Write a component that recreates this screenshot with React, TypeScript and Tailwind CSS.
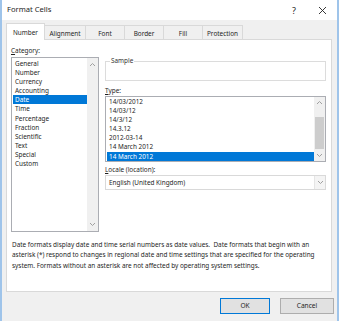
import { useState } from "react";

const categories = [
  "General",
  "Number",
  "Currency",
  "Accounting",
  "Date",
  "Time",
  "Percentage",
  "Fraction",
  "Scientific",
  "Text",
  "Special",
  "Custom",
];

const types = [
  "14/03/2012",
  "14/03/12",
  "14/3/12",
  "14.3.12",
  "2012-03-14",
  "14 March 2012",
  "14 March 2012",
];

const tabs = ["Number", "Alignment", "Font", "Border", "Fill", "Protection"];
const tabWidths = ["w-[39px]", "w-[42px]", "w-[40px]", "w-[40px]", "w-[40px]", "w-[41px]"];

function Chevron({ up }: { up?: boolean }) {
  return (
    <svg width="7" height="5" viewBox="0 0 7 5" className="text-[#a0a0a0]">
      <polyline
        points={up ? "1,4 3.5,1.5 6,4" : "1,1 3.5,3.5 6,1"}
        fill="none"
        stroke="currentColor"
        strokeWidth="1"
      />
    </svg>
  );
}

export default function App() {
  const [category, setCategory] = useState(4);
  const [type, setType] = useState(6);
  const [tab, setTab] = useState(0);

  return (
    <div
      className="w-[339px] h-[321px] bg-[#f0f0f0] border-l-2 border-l-[#9fc4ea] border-r-2 border-r-[#9fc4ea] text-[#1e1e1e] overflow-hidden flex flex-col"
      style={{ fontFamily: '"Noto Sans", "Open Sans", sans-serif' }}
    >
      {/* title bar */}
      <div className="h-[20px] bg-white flex items-center pl-[5px] pr-[10px] shrink-0">
        <span className="text-[7.6px] leading-none">Format Cells</span>
        <span className="ml-auto text-[9px] leading-none mr-[22px]">?</span>
        <svg width="9" height="9" viewBox="0 0 9 9">
          <path d="M1 1 L8 8 M8 1 L1 8" stroke="#222" strokeWidth="0.9" />
        </svg>
      </div>

      {/* tabs */}
      <div className="flex items-end pl-[4px] mt-[3px] h-[17px] shrink-0">
        {tabs.map((t, i) => (
          <button
            key={t}
            onClick={() => setTab(i)}
            className={
              "border border-[#d9d9d9] border-b-0 text-[6.4px] leading-none flex items-center justify-center -mr-px pt-[2px] " +
              tabWidths[i] +
              (i === tab ? " bg-white h-[17px] relative z-10" : " bg-[#f0f0f0] h-[15px]")
            }
          >
            {t}
          </button>
        ))}
      </div>

      {/* panel */}
      <div className="ml-[4px] w-[326px] h-[253px] bg-white border border-[#d9d9d9] -mt-px px-[4px] shrink-0 text-[6.4px]">
        <div className="flex">
          <div className="w-[88px] shrink-0">
            <div className="h-[10px] mt-[6px] leading-[10px]">
              <span className="underline">C</span>ategory:
            </div>
            <div className="mt-px h-[175px] border border-[#abadb3] flex">
              <div className="flex-1 pt-[1px] pl-px">
                {categories.map((c, i) => (
                  <div
                    key={c}
                    onClick={() => setCategory(i)}
                    className={
                      "h-[9.1px] leading-[9.1px] pl-[2px] " +
                      (i === category ? "bg-[#0078d7] text-white" : "")
                    }
                  >
                    {c}
                  </div>
                ))}
              </div>
              <div className="w-[11px] bg-[#f0f0f0] flex flex-col items-center justify-between py-[4px]">
                <Chevron up />
                <Chevron />
              </div>
            </div>
          </div>

          <div className="w-[221px] ml-[6px] shrink-0">
            <fieldset className="mt-[18px] h-[23px] border border-[#dcdcdc] px-[4px]">
              <legend className="text-[6.4px] leading-none px-px text-[#333]">Sample</legend>
            </fieldset>
            <div className="mt-[5px] h-[10px] leading-[10px]">
              <span className="underline">T</span>ype:
            </div>
            <div className="h-[66px] border border-[#abadb3] flex">
              <div className="flex-1 pl-px">
                {types.map((t, i) => (
                  <div
                    key={i}
                    onClick={() => setType(i)}
                    className={
                      "h-[9.1px] leading-[9.1px] pl-[2px] " +
                      (i === type ? "bg-[#0078d7] text-white" : "")
                    }
                  >
                    {t}
                  </div>
                ))}
              </div>
              <div className="w-[11px] bg-[#f0f0f0] flex flex-col items-center py-[3px]">
                <Chevron up />
                <div className="w-[9px] h-[32px] bg-[#cdcdcd] mt-[12px]" />
                <div className="mt-auto">
                  <Chevron />
                </div>
              </div>
            </div>
            <div className="mt-[3px] h-[10px] leading-[10px]">
              <span className="underline">L</span>ocale (location):
            </div>
            <div className="h-[15px] border border-[#d9d9d9] flex items-center">
              <span className="pl-[3px] flex-1">English (United Kingdom)</span>
              <div className="w-[11px] h-full flex items-center justify-center bg-[#f4f4f4] border-l border-[#e5e5e5]">
                <Chevron />
              </div>
            </div>
          </div>
        </div>

        <p className="mt-[8px] leading-[10.4px] whitespace-nowrap pl-px">
          Date formats display date and time serial numbers as date values.&nbsp; Date formats that begin with an
          <br />
          asterisk (*) respond to changes in regional date and time settings that are specified for the operating
          <br />
          system. Formats without an asterisk are not affected by operating system settings.
        </p>
      </div>

      {/* buttons */}
      <div className="flex justify-end gap-[10px] pr-[3px] mt-[6px] text-[6.6px]">
        <button className="w-[50px] h-[16px] bg-[#e1e1e1] border border-[#0078d7] leading-none">OK</button>
        <button className="w-[54px] h-[16px] bg-[#e1e1e1] border border-[#adadad] leading-none">Cancel</button>
      </div>
    </div>
  );
}
